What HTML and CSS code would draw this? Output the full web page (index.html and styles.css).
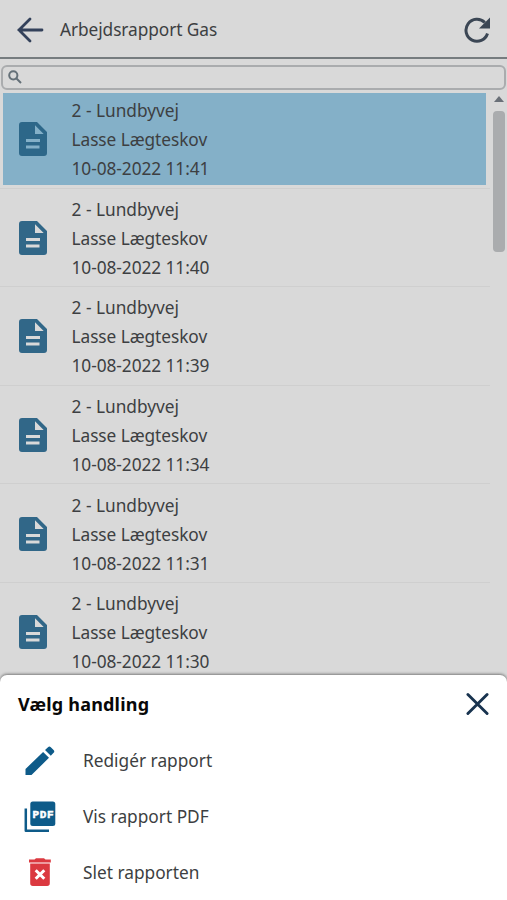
FILE: index.html
```html
<!DOCTYPE html>
<html lang="da">
<head>
<meta charset="utf-8">
<title>Arbejdsrapport Gas</title>
<link rel="stylesheet" href="styles.css">
</head>
<body>
<svg width="0" height="0" class="defs"><symbol id="doc" viewBox="0 0 28 34"><path fill="currentColor" fill-rule="evenodd" d="M3 0H18L28 10V31a3 3 0 0 1-3 3H3a3 3 0 0 1-3-3V3a3 3 0 0 1 3-3zM16 3.3V12H24.7zM7 17V20H21V17zM7 23.5V26.5H20.5V23.5z"/></symbol></svg>
<header class="bar">
  <svg class="back" viewBox="0 0 28 26"><path d="M14 2L3 13L14 24M3 13H26"/></svg>
  <h1 class="title">Arbejdsrapport Gas</h1>
  <svg class="reload" viewBox="0 0 28 28"><path class="arc" d="M20.8 6.5A11 11 0 1 0 23.5 17.5"/><path class="head" d="M26 1.5V12.5H15z"/></svg>
</header>
<div class="search"><svg viewBox="0 0 14 14"><circle cx="5.3" cy="5.3" r="4.1"/><path d="M8.5 8.5L13 13"/></svg></div>
<main class="content">
  <ul class="list">
    <li class="row selected"><svg class="doc"><use href="#doc"/></svg><div class="text"><p class="place">2 - Lundbyvej</p><p class="name">Lasse Lægteskov</p><p class="date">10-08-2022 11:41</p></div></li>
    <li class="row"><svg class="doc"><use href="#doc"/></svg><div class="text"><p class="place">2 - Lundbyvej</p><p class="name">Lasse Lægteskov</p><p class="date">10-08-2022 11:40</p></div></li>
    <li class="row"><svg class="doc"><use href="#doc"/></svg><div class="text"><p class="place">2 - Lundbyvej</p><p class="name">Lasse Lægteskov</p><p class="date">10-08-2022 11:39</p></div></li>
    <li class="row"><svg class="doc"><use href="#doc"/></svg><div class="text"><p class="place">2 - Lundbyvej</p><p class="name">Lasse Lægteskov</p><p class="date">10-08-2022 11:34</p></div></li>
    <li class="row"><svg class="doc"><use href="#doc"/></svg><div class="text"><p class="place">2 - Lundbyvej</p><p class="name">Lasse Lægteskov</p><p class="date">10-08-2022 11:31</p></div></li>
    <li class="row"><svg class="doc"><use href="#doc"/></svg><div class="text"><p class="place">2 - Lundbyvej</p><p class="name">Lasse Lægteskov</p><p class="date">10-08-2022 11:30</p></div></li>
  </ul>
  <div class="scroll"><i class="up"></i><i class="thumb"></i></div>
</main>
<section class="sheet">
  <div class="sheet-head"><h2>Vælg handling</h2><svg class="close" viewBox="0 0 24 24"><path d="M2 2L22 22M22 2L2 22"/></svg></div>
  <div class="action"><svg class="icon" viewBox="0 0 32 32"><path d="M1.5 30V24L19.1 7L25 12.8L7.5 30zM21 5L24 2.2a2 2 0 0 1 2.8 0L29.6 5a2 2 0 0 1 0 2.8L26.8 10.8z"/></svg><span class="edit">Redigér rapport</span></div>
  <div class="action"><svg class="icon" viewBox="0 0 32 32"><path class="back-page" d="M1.8 7.5V29.8H25"/><rect x="6.3" y=".5" width="25" height="24.5" rx="2.5"/><text x="8.5 15.8 23.1" y="16.5">PDF</text></svg><span class="pdf">Vis rapport PDF</span></div>
  <div class="action"><svg class="icon delete" viewBox="0 0 32 32"><path d="M5 3.4H10.5L12 2.2H20L21.5 3.4H26.8V6.4H5zM6.2 7.6H25.8V27.3a2.7 2.7 0 0 1-2.7 2.7H8.9a2.7 2.7 0 0 1-2.7-2.7z"/><path class="cross" d="M11.7 14.2L20.3 22.8M20.3 14.2L11.7 22.8"/></svg><span class="remove">Slet rapporten</span></div>
</section>
</body>
</html>
```
FILE: styles.css
```css
* { box-sizing: border-box; margin: 0; padding: 0; }
body { width: 507px; height: 900px; overflow: hidden; display: flex; flex-direction: column; background: #d9d9d9; color: #3d3f42; font: 17.3px "Noto Sans", "Open Sans", sans-serif; }
.defs { position: absolute; }
svg { flex: none; }
.bar { height: 59px; flex: none; display: flex; align-items: center; padding: 2px 15px 0 16px; border-bottom: 2px solid #767c7f; }
.back { width: 28px; height: 26px; fill: none; stroke: #33415a; stroke-width: 2.8; stroke-linecap: round; }
.title { flex: 1; margin-left: 16px; font-size: 17.3px; font-weight: 400; letter-spacing: -.08px; }
.reload { width: 28px; height: 28px; }
.arc { fill: none; stroke: #3b4654; stroke-width: 3; }
.head { fill: #3b4654; }
.search { width: 505px; height: 25px; flex: none; margin: 6px 0 0 1px; border: 2px solid #aaacae; border-radius: 6px; padding: 3px 5px; }
.search svg { display: block; width: 14px; height: 14px; fill: none; stroke: #647078; stroke-width: 2; }
.content { height: 585px; flex: none; display: flex; overflow: hidden; }
.list { width: 490px; list-style: none; }
.row { height: 98.6px; display: flex; align-items: center; padding: 1px 0 0 19px; border-bottom: 1px solid #cfcfcf; }
.selected { background: linear-gradient(#84b0c8, #84b0c8) 3px 3px / 483px 92px no-repeat; }
.doc { width: 28px; height: 34px; color: #316788; }
.selected .doc { color: #2d6789; }
.text { margin-left: 24.5px; line-height: 29px; padding-top: 1px; white-space: nowrap; }
.name, .date { letter-spacing: -.06px; }
.scroll { width: 17px; display: flex; flex-direction: column; align-items: center; padding-top: 6px; }
.up { border: 5px solid transparent; border-top: 0; border-bottom: 6px solid #6a7078; }
.thumb { width: 12px; height: 141px; margin-top: 9px; border-radius: 4px; background: #aaacae; }
.sheet { flex: 1; background: #fff; border-radius: 7px 7px 0 0; box-shadow: 0 -1px 3px #777; }
.sheet-head { height: 58px; display: flex; align-items: center; justify-content: space-between; padding: 0 18px 0 18px; color: #080808; }
h2 { font-size: 18px; font-weight: 700; letter-spacing: .2px; }
.close { width: 23px; height: 24px; stroke: #18334f; stroke-width: 3; stroke-linecap: round; }
.action { height: 55.7px; display: flex; align-items: center; padding-left: 24px; }
.icon { width: 32px; height: 32px; fill: #0e5b89; }
.action span { margin-left: 27px; white-space: nowrap; }
.back-page { fill: none; stroke: #0e5b89; stroke-width: 2.5; stroke-linejoin: round; }
.icon text { font: 700 11px "Liberation Mono", monospace; fill: #fff; stroke: #fff; stroke-width: .5; }
.delete { fill: #db3940; }
.cross { stroke: #fff; stroke-width: 3; }
```
